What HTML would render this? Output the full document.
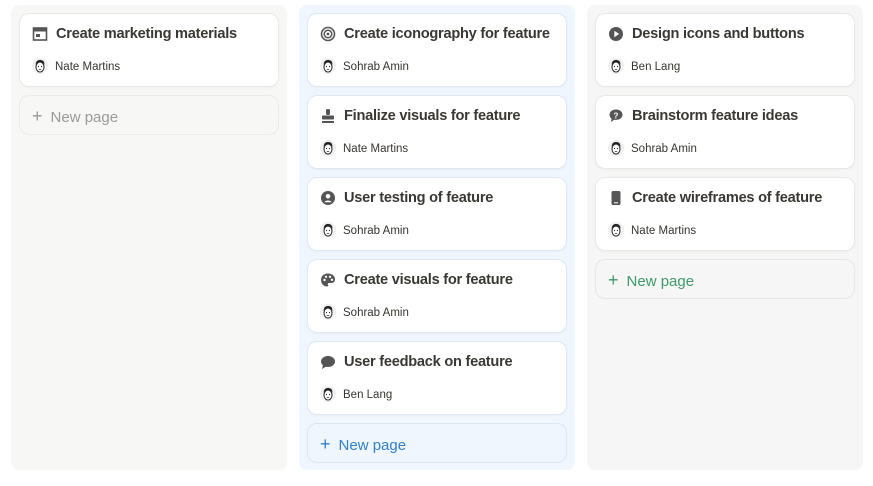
<!DOCTYPE html>
<html><head><meta charset="utf-8"><style>
*{box-sizing:border-box;margin:0;padding:0}
body{width:873px;height:486px;background:#fff;font-family:"Liberation Sans",sans-serif;position:relative;overflow:hidden}
.col{position:absolute;top:5px;width:276px;height:465px;border-radius:8px}
.c1{left:11px;background:#f7f7f5}
.c2{left:299px;background:#f0f6fd}
.c3{left:587px;background:#f5f6f5}
.card{position:absolute;left:8px;width:260px;height:74px;background:#fff;border-radius:10px;border:1px solid #e8e8e5;box-shadow:0 1px 2px rgba(0,0,0,.03)}
.c2 .card{border-color:#dfe8f2}
.t{position:absolute;left:36px;top:12px;font-size:14.6px;color:#37352f;font-weight:700;letter-spacing:-.25px;white-space:nowrap;color:#3a3833}
.ic{position:absolute;left:12px;top:12px;width:16px;height:16px}
.av{position:absolute;left:12px;top:44px;width:16px;height:16px}
.n{position:absolute;left:35px;top:47px;font-size:11.5px;color:#37352f}
.np{position:absolute;left:8px;width:260px;height:40px;border-radius:10px;font-size:15px;line-height:40px;padding-left:12px}
.c1 .np{border:1px solid #ebebe8;color:#9b9a97}
.c2 .np{border:1px solid #dbe6f1;color:#2f80d0}
.c3 .np{border:1px solid #e4e7e4;color:#3d9a6a}
.np b{font-weight:400;font-size:18px;margin-right:8px}
</style></head><body>
<svg width="0" height="0" style="position:absolute"><defs>
<g id="face"><circle cx="8" cy="8" r="7.5" fill="#f3f3f3" stroke="#ddd" stroke-width=".5"/><ellipse cx="8" cy="9" rx="4" ry="5" fill="#fff" stroke="#222" stroke-width="1"/><path d="M3.5 7 Q4 1.5 8 2 Q12.5 1.5 12.5 7 Q11 4 8 4.5 Q5 4 3.5 7Z" fill="#222"/><circle cx="6.5" cy="8.5" r=".6" fill="#222"/><circle cx="9.5" cy="8.5" r=".6" fill="#222"/><path d="M6.8 11.5h2.4" stroke="#222" stroke-width=".7"/></g>
</defs></svg>

<div class="col c1">
 <div class="card" style="top:8px"><svg class="ic" viewBox="0 0 16 16"><rect x="1.5" y="2" width="13" height="12" fill="none" stroke="#555" stroke-width="1.6"/><rect x="1.5" y="2" width="13" height="3.5" fill="#555"/><rect x="4" y="8" width="4" height="3" fill="#555"/></svg><div class="t">Create marketing materials</div><svg class="av" viewBox="0 0 16 16"><use href="#face"/></svg><div class="n">Nate Martins</div></div>
 <div class="np" style="top:90px"><b>+</b>New page</div>
</div>

<div class="col c2">
 <div class="card" style="top:8px"><svg class="ic" viewBox="0 0 16 16"><circle cx="8" cy="8" r="6.5" fill="none" stroke="#555" stroke-width="1.6"/><circle cx="8" cy="8" r="3.8" fill="none" stroke="#555" stroke-width="1.5"/><circle cx="8" cy="8" r="1.4" fill="#555"/></svg><div class="t">Create iconography for feature</div><svg class="av" viewBox="0 0 16 16"><use href="#face"/></svg><div class="n">Sohrab Amin</div></div>
 <div class="card" style="top:90px"><svg class="ic" viewBox="0 0 16 16"><rect x="6" y="1" width="4" height="6" rx="1.5" fill="#555"/><rect x="2" y="7.5" width="12" height="4" rx="1" fill="#555"/><rect x="2" y="13" width="12" height="2" fill="#555"/></svg><div class="t">Finalize visuals for feature</div><svg class="av" viewBox="0 0 16 16"><use href="#face"/></svg><div class="n">Nate Martins</div></div>
 <div class="card" style="top:172px"><svg class="ic" viewBox="0 0 16 16"><circle cx="8" cy="8" r="7" fill="#555"/><circle cx="8" cy="6.3" r="2.3" fill="#fff"/><path d="M4 12.2Q8 8.5 12 12.2" fill="#fff"/></svg><div class="t">User testing of feature</div><svg class="av" viewBox="0 0 16 16"><use href="#face"/></svg><div class="n">Sohrab Amin</div></div>
 <div class="card" style="top:254px"><svg class="ic" viewBox="0 0 16 16"><path d="M8 1.5C3.5 1.5 1 4.5 1 8s2.5 6.5 6 6.5c1.2 0 1.5-.8 1-1.6-.5-.9 0-1.9 1.2-1.9H11c2.5 0 4-1.5 4-3.8C15 4 12 1.5 8 1.5z" fill="#555"/><circle cx="4.5" cy="8" r="1.2" fill="#fff"/><circle cx="6" cy="4.8" r="1.2" fill="#fff"/><circle cx="10" cy="4.8" r="1.2" fill="#fff"/><circle cx="12" cy="7.8" r="1.2" fill="#fff"/></svg><div class="t">Create visuals for feature</div><svg class="av" viewBox="0 0 16 16"><use href="#face"/></svg><div class="n">Sohrab Amin</div></div>
 <div class="card" style="top:336px"><svg class="ic" viewBox="0 0 16 16"><ellipse cx="8" cy="7.5" rx="7" ry="5.5" fill="#555"/><path d="M3 11l-1 4 5-3z" fill="#555"/></svg><div class="t">User feedback on feature</div><svg class="av" viewBox="0 0 16 16"><use href="#face"/></svg><div class="n">Ben Lang</div></div>
 <div class="np" style="top:418px"><b>+</b>New page</div>
</div>

<div class="col c3">
 <div class="card" style="top:8px"><svg class="ic" viewBox="0 0 16 16"><circle cx="8" cy="8" r="7" fill="#555"/><path d="M6.3 4.8v6.4L11.2 8z" fill="#fff"/></svg><div class="t">Design icons and buttons</div><svg class="av" viewBox="0 0 16 16"><use href="#face"/></svg><div class="n">Ben Lang</div></div>
 <div class="card" style="top:90px"><svg class="ic" viewBox="0 0 16 16"><path d="M8 1.5c-3.8 0-6.5 2.3-6.5 5.3 0 1.7.8 3 2 3.9L3 14l3.2-2.3c.6.1 1.2.2 1.8.2 3.8 0 6.5-2.2 6.5-5.1S11.8 1.5 8 1.5z" fill="#555"/><text x="8" y="10.5" font-size="8" font-weight="700" text-anchor="middle" fill="#fff" font-family="Liberation Sans">?</text></svg><div class="t">Brainstorm feature ideas</div><svg class="av" viewBox="0 0 16 16"><use href="#face"/></svg><div class="n">Sohrab Amin</div></div>
 <div class="card" style="top:172px"><svg class="ic" viewBox="0 0 16 16"><rect x="3.5" y="1" width="9" height="14" rx="1.8" fill="#555"/><rect x="6" y="12.3" width="4" height="1" fill="#fff"/></svg><div class="t">Create wireframes of feature</div><svg class="av" viewBox="0 0 16 16"><use href="#face"/></svg><div class="n">Nate Martins</div></div>
 <div class="np" style="top:254px"><b>+</b>New page</div>
</div>
</body></html>
